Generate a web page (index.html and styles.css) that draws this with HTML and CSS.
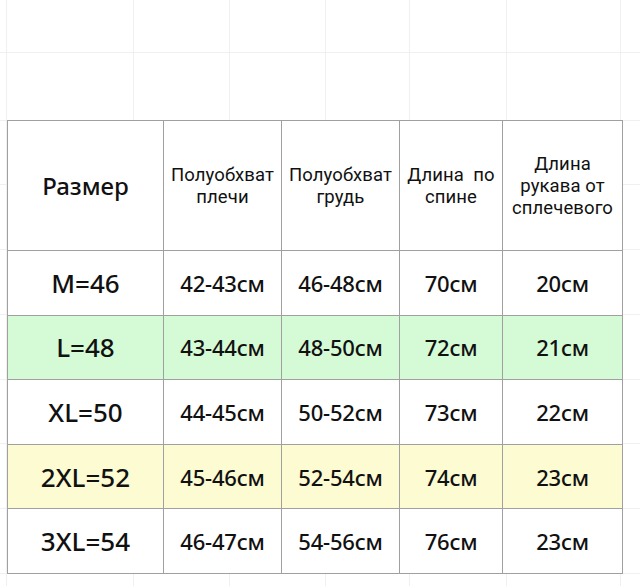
FILE: index.html
```html
<!DOCTYPE html>
<html lang="ru">
<head>
<meta charset="utf-8">
<title>Таблица размеров</title>
<link rel="stylesheet" href="styles.css">
</head>
<body>
<main class="sheet">
  <table class="sizes">
    <colgroup>
      <col class="c1"><col class="c2"><col class="c3"><col class="c4"><col class="c5">
    </colgroup>
    <thead>
      <tr class="head">
        <th class="size-head">Размер</th>
        <th>Полуобхват<br>плечи</th>
        <th>Полуобхват<br>грудь</th>
        <th>Длина&nbsp; по<br>спине</th>
        <th>Длина<br>рукава от<br>сплечевого</th>
      </tr>
    </thead>
    <tbody>
      <tr><td class="size">M=46</td><td>42-43см</td><td>46-48см</td><td>70см</td><td>20см</td></tr>
      <tr class="green"><td class="size">L=48</td><td>43-44см</td><td>48-50см</td><td>72см</td><td>21см</td></tr>
      <tr><td class="size">XL=50</td><td>44-45см</td><td>50-52см</td><td>73см</td><td>22см</td></tr>
      <tr class="yellow"><td class="size">2XL=52</td><td>45-46см</td><td>52-54см</td><td>74см</td><td>23см</td></tr>
      <tr><td class="size">3XL=54</td><td>46-47см</td><td>54-56см</td><td>76см</td><td>23см</td></tr>
    </tbody>
  </table>
</main>
</body>
</html>
```
FILE: styles.css
```css
html, body {
  margin: 0;
  padding: 0;
}
body {
  width: 640px;
  height: 586px;
  overflow: hidden;
  background-color: #fff;
  background-image:
    linear-gradient(#f0f0f0, #f0f0f0),
    linear-gradient(#f0f0f0, #f0f0f0),
    linear-gradient(#f0f0f0, #f0f0f0),
    linear-gradient(#f0f0f0, #f0f0f0),
    linear-gradient(#f0f0f0, #f0f0f0),
    linear-gradient(#f0f0f0, #f0f0f0),
    linear-gradient(#f0f0f0, #f0f0f0),
    linear-gradient(#f0f0f0, #f0f0f0),
    linear-gradient(#f0f0f0, #f0f0f0),
    linear-gradient(#f0f0f0, #f0f0f0),
    linear-gradient(#f0f0f0, #f0f0f0),
    linear-gradient(#f0f0f0, #f0f0f0),
    linear-gradient(#f0f0f0, #f0f0f0),
    linear-gradient(#f0f0f0, #f0f0f0),
    linear-gradient(#f0f0f0, #f0f0f0),
    linear-gradient(#f0f0f0, #f0f0f0);
  background-repeat: no-repeat;
  background-size:
    1px 100%, 1px 100%, 1px 100%, 1px 100%, 1px 100%, 1px 100%, 1px 100%,
    100% 1px, 100% 1px, 100% 1px, 100% 1px, 100% 1px, 100% 1px, 100% 1px, 100% 1px, 100% 1px;
  background-position:
    6px 0, 133px 0, 229px 0, 325px 0, 409px 0, 506px 0, 620px 0,
    0 52px, 0 120px, 0 184px, 0 249px, 0 314px, 0 379px, 0 443px, 0 508px, 0 573px;
  font-family: "Noto Sans", "Liberation Sans", sans-serif;
  color: #111;
}
.sheet {
  padding: 120px 0 0 7px;
}
.sizes {
  border-collapse: collapse;
  table-layout: fixed;
  width: 615px;
}
.c1 { width: 156px; }
.c2 { width: 118px; }
.c3 { width: 118px; }
.c4 { width: 103px; }
.c5 { width: 120px; }
.sizes th,
.sizes td {
  border: 1px solid #a0a0a0;
  text-align: center;
  vertical-align: middle;
  padding: 0;
  background: #fff;
}
.head th {
  height: 129px;
  font-family: Roboto, "Noto Sans", sans-serif;
  font-weight: 400;
  font-size: 18.5px;
  line-height: 22px;
  letter-spacing: 0.1px;
}
.head th.size-head {
  font-family: "Noto Sans", "Liberation Sans", sans-serif;
  font-size: 24px;
  font-weight: 500;
  letter-spacing: 0;
}
.sizes tbody tr {
  height: 64.6px;
}
.sizes td {
  font-size: 22px;
  font-weight: 500;
  letter-spacing: -0.2px;
}
.sizes td.size {
  font-size: 26px;
  letter-spacing: 0;
}
.sizes tr.green td {
  background: #d5fbd6;
}
.sizes tr.yellow td {
  background: #fdfbd2;
}
```
